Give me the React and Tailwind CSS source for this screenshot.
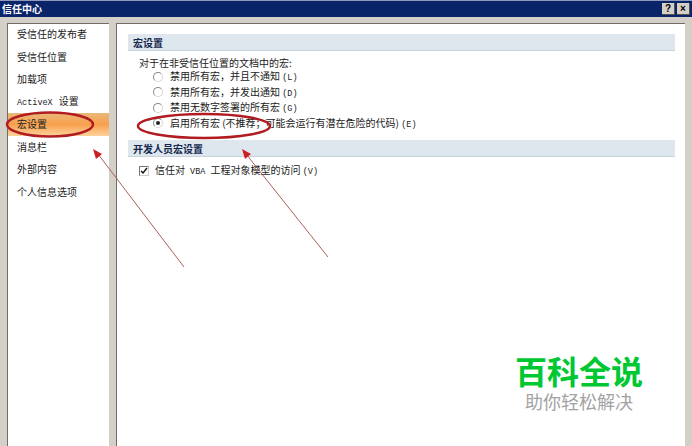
const font = { fontFamily: '"Noto Sans CJK SC", sans-serif' };

// latin bits in the reference are a narrow bitmap-like font
const Mono = ({ children }) => (
  <span className="text-[8.5px]" style={{ fontFamily: '"Liberation Mono", monospace' }}>{children}</span>
);

const navItems = [
  { id: 'publishers', label: '受信任的发布者' },
  { id: 'locations', label: '受信任位置' },
  { id: 'addins', label: '加载项' },
  { id: 'activex', label: <><Mono>ActiveX</Mono><span className="ml-[6px]">设置</span></> },
  { id: 'macros', label: '宏设置', active: true },
  { id: 'bar', label: '消息栏' },
  { id: 'external', label: '外部内容' },
  { id: 'privacy', label: '个人信息选项' },
];

const macroOptions = [
  { label: '禁用所有宏，并且不通知', key: '(L)' },
  { label: '禁用所有宏，并发出通知', key: '(D)' },
  { label: '禁用无数字签署的所有宏', key: '(G)' },
  { label: '启用所有宏 (不推荐；可能会运行有潜在危险的代码)', key: '(E)', checked: true },
];

const Radio = ({ checked }) => (
  <span className="relative flex h-[10px] w-[10px] shrink-0 items-center justify-center rounded-full border border-[#8a8a86] border-r-[#d8d6d0] border-b-[#d8d6d0] bg-white">
    {checked && <span className="h-[4px] w-[4px] rounded-full bg-[#222]" />}
  </span>
);

const SectionHeader = ({ children }) => (
  <div className="flex h-[17px] items-center border-b border-[#c8d3da] bg-[#dee7ed] pl-[5px] text-[10px] font-bold text-[#14284f]">
    {children}
  </div>
);

const TitleButton = ({ children }) => (
  <span className="flex h-[12px] w-[13px] items-center justify-center border-b border-r border-[#55534e] bg-[#d4d0c8] text-[10px] font-bold leading-none text-black" style={{ fontFamily: '"Liberation Sans", sans-serif' }}>
    {children}
  </span>
);

const Annotations = () => (
  <svg className="pointer-events-none absolute left-0 top-0" width="692" height="446" viewBox="0 0 692 446" fill="none">
    <ellipse cx="50" cy="124.5" rx="43" ry="12" stroke="#b01c22" strokeWidth="2.5" />
    <ellipse cx="204" cy="126" rx="66" ry="12" stroke="#b01c22" strokeWidth="2.5" />
    <line x1="184" y1="267" x2="98" y2="154" stroke="#a8605c" strokeWidth="1" />
    <polygon points="93,149 102,154 96,159" fill="#cc1f1f" />
    <line x1="328" y1="257" x2="246" y2="154" stroke="#a8605c" strokeWidth="1" />
    <polygon points="242,149 251,154 245,159" fill="#cc1f1f" />
  </svg>
);

export default function App() {
  return (
    <div className="relative flex h-[446px] w-[692px] flex-col overflow-hidden bg-[#d4d0c8] text-[#222]" style={font}>
      {/* title bar */}
      <div className="flex h-[17px] shrink-0 items-center justify-between border-t border-[#8f9bb8] bg-[#0a246a] px-[2px]">
        <span className="text-[10px] font-bold leading-none text-white">信任中心</span>
        <div className="flex gap-[2px]">
          <TitleButton>?</TitleButton>
          <TitleButton>×</TitleButton>
        </div>
      </div>

      <div className="flex min-h-0 flex-1 gap-[7px] px-[7px] pt-[6px]">
        {/* left nav */}
        <div className="w-[102px] shrink-0 border-l border-t border-[#6f6d68] bg-white">
          <div className="-mt-px">
            {navItems.map((item) => (
              <div
                key={item.id}
                className={`flex h-[22.5px] items-center whitespace-pre pl-[9px] text-[10px] leading-none ${item.active ? 'bg-gradient-to-b from-[#e8b878] via-[#f9a04c] to-[#fcd29a]' : ''}`}
              >
                <span>{item.label}</span>
              </div>
            ))}
          </div>
        </div>

        {/* main panel */}
        <div className="min-w-0 flex-1 border-l border-t border-[#6f6d68] bg-white pl-[11px] pr-[10px] pt-[10px]">
          <SectionHeader>宏设置</SectionHeader>
          <div className="pl-[11px] pt-[5px] text-[10px] leading-none">
            <div className="flex h-[13px] items-center">对于在非受信任位置的文档中的宏:</div>
            <div className="pl-[14px]">
              {macroOptions.map((opt) => (
                <div key={opt.key} className="flex h-[15.5px] items-center gap-[7px] whitespace-pre">
                  <Radio checked={opt.checked} />
                  <span>{opt.label} <Mono>{opt.key}</Mono></span>
                </div>
              ))}
            </div>
          </div>
          <div className="pt-[9px]">
            <SectionHeader>开发人员宏设置</SectionHeader>
          </div>
          <div className="flex items-center gap-[6px] whitespace-pre pl-[11px] pt-[8px] text-[10px] leading-none">
            <span className="flex h-[10px] w-[10px] items-center justify-center border border-[#777] border-r-[#ccc] border-b-[#ccc] bg-white">
              <svg width="8" height="8" viewBox="0 0 8 8" fill="none">
                <path d="M1 4l2 2 4-5" stroke="#111" strokeWidth="1.4" />
              </svg>
            </span>
            <span>信任对<Mono>{' VBA '}</Mono>工程对象模型的访问 <Mono>(V)</Mono></span>
          </div>
        </div>
      </div>

      <Annotations />

      {/* watermark */}
      <div className="absolute left-[502px] top-[352px] flex w-[154px] flex-col items-center">
        <span className="text-[32px] font-bold leading-[36px] text-[#00c832]">百科全说</span>
        <span className="mt-[2px] text-[18px] leading-[22px] text-[#a3a3a3]">助你轻松解决</span>
      </div>
    </div>
  );
}
